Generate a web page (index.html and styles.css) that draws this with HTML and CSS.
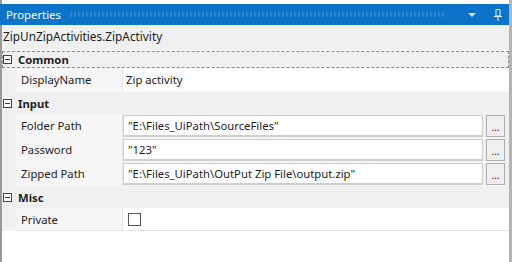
FILE: index.html
```html
<!DOCTYPE html>
<html lang="en">
<head>
    <meta charset="UTF-8">
    <title>Properties</title>
    <link rel="stylesheet" href="styles.css">
</head>
<body>
    <div class="panel">
        <div class="titlebar">
            <span class="title">Properties</span>
            <span class="grip"></span>
            <svg class="tb-icon" width="10" height="8" viewBox="0 0 10 8">
                <path d="M1 2 H9 L5 6 Z" fill="#cfe3f5"/>
            </svg>
            <svg class="tb-icon" width="10" height="14" viewBox="0 0 10 14">
                <path d="M3 1.5 H7 V8 H3 Z M1 8.5 H9 M5 9 V13" stroke="#e8f1fa" stroke-width="1" fill="none"/>
            </svg>
        </div>
        <div class="typename">ZipUnZipActivities.ZipActivity</div>
        <div class="grid">
            <div class="cat focus"><span class="toggle"></span>Common</div>
            <div class="row">
                <div class="name">DisplayName</div>
                <div class="value plain">Zip activity</div>
            </div>
            <div class="cat"><span class="toggle"></span>Input</div>
            <div class="row">
                <div class="name">Folder Path</div>
                <div class="value"><span class="box">"E:\Files_UiPath\SourceFiles"</span><span class="more">...</span></div>
            </div>
            <div class="row">
                <div class="name">Password</div>
                <div class="value"><span class="box">"123"</span><span class="more">...</span></div>
            </div>
            <div class="row">
                <div class="name">Zipped Path</div>
                <div class="value"><span class="box">"E:\Files_UiPath\OutPut Zip File\output.zip"</span><span class="more">...</span></div>
            </div>
            <div class="cat"><span class="toggle"></span>Misc</div>
            <div class="row last">
                <div class="name">Private</div>
                <div class="value plain"><span class="check"></span></div>
            </div>
        </div>
    </div>
</body>
</html>
```

FILE: styles.css
```css
body {
    margin: 0;
    background: #ffffff;
    font-family: "Noto Sans", "Open Sans", sans-serif;
    font-size: 11.3px;
    color: #1e1e1e;
}

.panel {
    width: 512px;
    height: 262px;
    box-sizing: border-box;
    padding-top: 4px;
    border-left: 2px solid #9a9a9a;
    border-right: 3px solid #b4b4b4;
    background: #ffffff;
}

.titlebar {
    height: 21px;
    margin-left: -2px;
    background: #0b74c9;
    display: flex;
    align-items: center;
    padding: 0 6px 0 6px;
    gap: 8px;
}

.title {
    color: #ffffff;
    font-size: 11.3px;
}

.grip {
    flex: 1;
    height: 5px;
    background-image: radial-gradient(circle, #3f90d5 0.6px, transparent 0.9px);
    background-size: 4px 2px;
    margin-right: 6px;
}

.tb-icon {
    display: block;
    margin-left: 8px;
}

.typename {
    background: #f0f0f0;
    height: 25px;
    line-height: 23px;
    padding-left: 1px;
    font-size: 11.8px;
}

.grid {
    background: #f0f0f0;
}

.cat {
    height: 22px;
    display: flex;
    align-items: center;
    font-weight: bold;
    background: #f0f0f0;
}

.cat.focus {
    height: 17px;
    outline: 1px dashed #8a8a8a;
    outline-offset: -1px;
    margin-top: 1px;
}

.toggle {
    width: 9px;
    height: 9px;
    border: 1px solid #444;
    box-sizing: border-box;
    margin: 0 6px 0 1px;
    position: relative;
    background: #fff;
}

.toggle::after {
    content: "";
    position: absolute;
    left: 1px;
    right: 1px;
    top: 3px;
    height: 1px;
    background: #333;
}

.row {
    display: grid;
    grid-template-columns: 107px 1fr;
    margin-left: 14px;
    height: 23px;
    border-bottom: 1px solid #f7f7f7;
}

.row.last {
    height: 22px;
    border-bottom: 1px solid #e4e4e4;
}

.name {
    display: flex;
    align-items: center;
    padding-left: 5px;
    background: #f6f6f6;
    border-right: 1px solid #e4e4e4;
}

.value {
    display: flex;
    align-items: center;
    gap: 3px;
    padding: 0 4px 0 0;
    background: #f0f0f0;
}

.value.plain {
    padding-left: 3px;
    background: #ffffff;
}

.box {
    flex: 1;
    height: 22px;
    box-sizing: border-box;
    border: 1px solid #cfcfcf;
    border-bottom-width: 2px;
    background: #ffffff;
    display: flex;
    align-items: center;
    padding-left: 4px;
}

.more {
    width: 19px;
    height: 22px;
    box-sizing: border-box;
    border: 1px solid #b0b0b0;
    background: #f0f0f0;
    font-size: 10px;
    display: flex;
    align-items: flex-end;
    justify-content: center;
    padding-bottom: 4px;
    line-height: 1;
}

.check {
    width: 13px;
    height: 13px;
    box-sizing: border-box;
    border: 1px solid #555;
    background: #fff;
    margin-left: 2px;
}
```
